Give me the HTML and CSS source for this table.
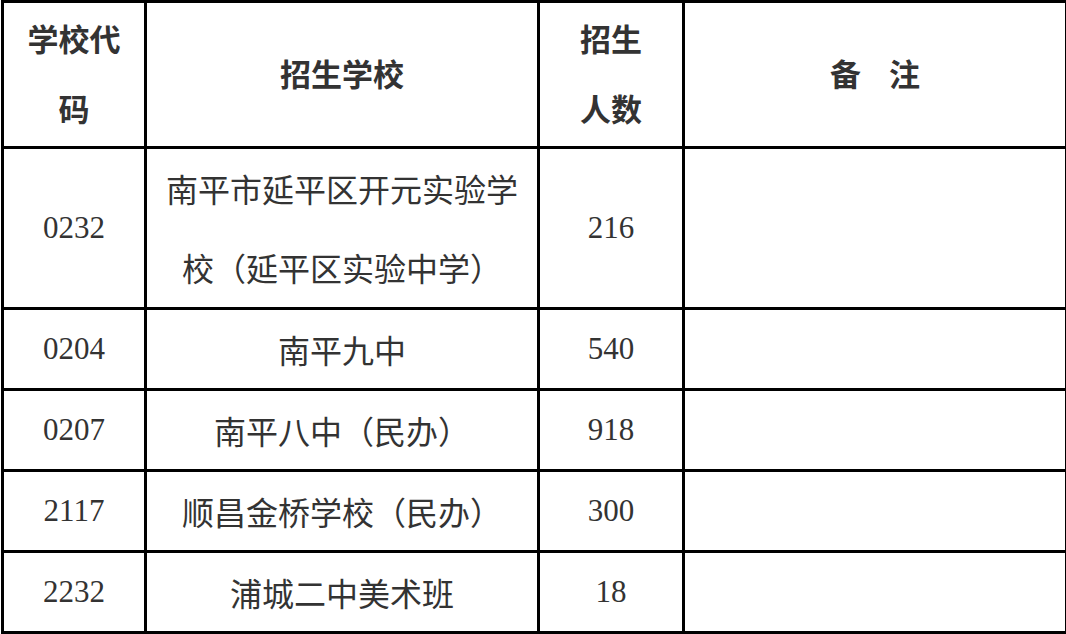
FILE: index.html
```html
<!DOCTYPE html>
<html lang="zh-CN">
<head>
<meta charset="utf-8">
<title>招生学校</title>
<link rel="stylesheet" href="styles.css">
</head>
<body>
<table class="plan">
  <colgroup>
    <col class="c-code">
    <col class="c-school">
    <col class="c-num">
    <col class="c-note">
  </colgroup>
  <thead>
    <tr class="head">
      <th>学校代<br>码</th>
      <th>招生学校</th>
      <th>招生<br>人数</th>
      <th>备&nbsp;&nbsp;&nbsp;&nbsp;注</th>
    </tr>
  </thead>
  <tbody>
    <tr class="tall">
      <td class="num">0232</td>
      <td class="name two">南平市延平区开元实验学<br>校（延平区实验中学）</td>
      <td class="num">216</td>
      <td></td>
    </tr>
    <tr>
      <td class="num">0204</td>
      <td class="name">南平九中</td>
      <td class="num">540</td>
      <td></td>
    </tr>
    <tr>
      <td class="num">0207</td>
      <td class="name">南平八中（民办）</td>
      <td class="num">918</td>
      <td></td>
    </tr>
    <tr>
      <td class="num">2117</td>
      <td class="name">顺昌金桥学校（民办）</td>
      <td class="num">300</td>
      <td></td>
    </tr>
    <tr>
      <td class="num">2232</td>
      <td class="name">浦城二中美术班</td>
      <td class="num">18</td>
      <td></td>
    </tr>
  </tbody>
</table>
</body>
</html>
```
FILE: styles.css
```css
html, body {
  margin: 0;
  padding: 0;
  background: #ffffff;
}

.plan {
  margin: 0 0 0 1px;
  width: 1064px;
  table-layout: fixed;
  border-collapse: collapse;
  color: #333333;
}

.c-code { width: 143px; }
.c-school { width: 393px; }
.c-num { width: 145px; }
.c-note { width: 383px; }

.plan th,
.plan td {
  border: 3px solid #000000;
  padding: 0;
  text-align: center;
  vertical-align: middle;
}

.plan th {
  font-family: "Noto Sans CJK SC", "Noto Sans", sans-serif;
  font-weight: 700;
  font-size: 31px;
  line-height: 70px;
  padding-bottom: 3px;
}

.head { height: 145px; }

.plan tbody tr { height: 81px; }
.plan tbody tr.tall { height: 161px; }

.name {
  font-family: "Noto Sans CJK SC", "Noto Sans", sans-serif;
  font-size: 32px;
  line-height: 40px;
}

.name.two {
  line-height: 79px;
}

.num {
  font-family: "Liberation Serif", "Times New Roman", serif;
  font-size: 31px;
  line-height: 40px;
}
```
